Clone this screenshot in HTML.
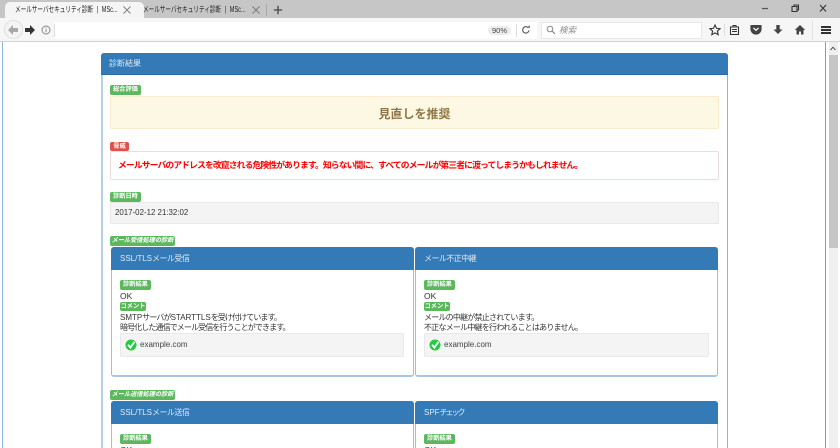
<!DOCTYPE html>
<html lang="ja"><head><meta charset="utf-8"><title>メールサーバセキュリティ診断</title>
<style>
html,body{margin:0;padding:0;width:840px;height:448px;overflow:hidden;background:#fff}
body{position:relative;font-family:"Liberation Sans","Noto Sans CJK JP",sans-serif;color:#333}
div,svg{position:absolute;box-sizing:border-box}
.t{white-space:nowrap;line-height:1}
.b{background:#5cb85c;color:#fff;font-size:6.2px;font-weight:bold;border-radius:2px;text-align:center;white-space:nowrap;height:10px;line-height:10px}
.ph{background:#337ab7;color:#dfe9f3;font-size:8px;white-space:nowrap}
.sub{border:1px solid #9dbfdd;border-bottom:2px solid #a9c6e0;border-radius:3px;background:#fff}
.well{background:#f4f4f4;border:1px solid #e9e9e9;border-radius:2px}
.tab{font-size:8px;color:#222;transform:scaleX(.7);transform-origin:0 0;word-spacing:3px}
.j{letter-spacing:-.9px}
.k{letter-spacing:-.78px}
.h{letter-spacing:-.55px}
.c{font-size:8px;color:#444}
</style></head><body>
<!-- tab strip -->
<div style="left:0;top:0;width:840px;height:18px;background:#c6c6c6"></div>
<div style="left:5px;top:2px;width:139px;height:17px;background:#f5f5f5;border-radius:5px 5px 0 0"></div>
<div class="t tab" style="left:15px;top:6px">メールサーバセキュリティ診断 | MSc...</div>
<svg style="left:122px;top:5px" width="10" height="10" viewBox="0 0 10 10"><path d="M1.500 1.500l7 7M8.500 1.500l-7 7" stroke="#777" stroke-width=".9" fill="none"/></svg>
<div class="t tab" style="left:143px;top:6px">メールサーバセキュリティ診断 | MSc...</div>
<svg style="left:251px;top:5px" width="10" height="10" viewBox="0 0 10 10"><path d="M1.500 1.500l7 7M8.500 1.500l-7 7" stroke="#777" stroke-width=".9" fill="none"/></svg>
<div style="left:266px;top:4px;width:1px;height:12px;background:#aaa"></div>
<svg style="left:273px;top:5px" width="10" height="10" viewBox="0 0 10 10"><path d="M5 .8v8.400M.8 5h8.400" stroke="#444" stroke-width="1.300" fill="none"/></svg>
<svg style="left:762px;top:4px" width="70" height="10" viewBox="0 0 70 10"><path d="M0 4.500h6" stroke="#555" stroke-width="1.200"/><path d="M30.500 2.500h4.500v5h-5v-5zM32 2.500V1h4.500v5H35" stroke="#333" stroke-width="1.100" fill="none"/><path d="M58 1l6 6.500M64 1l-6 6.500" stroke="#333" stroke-width="1.100"/></svg>
<!-- toolbar -->
<div style="left:0;top:18px;width:840px;height:24px;background:#f6f6f6;border-bottom:1px solid #d2d2d2"></div>
<div style="left:54px;top:22px;width:483px;height:17px;background:#fff"></div>
<div style="left:4px;top:20px;width:19px;height:19px;border-radius:50%;background:#f4f4f4;border:1px solid #e0e0e0"></div>
<svg style="left:7px;top:24px" width="12" height="12" viewBox="0 0 12 12"><path d="M6 1L1 6l5 5V8h5V4H6z" fill="#a8a8a8"/></svg>
<svg style="left:24px;top:24px" width="12" height="12" viewBox="0 0 12 12"><path d="M6 1l5 5-5 5V8H1V4h5z" fill="#333"/></svg>
<svg style="left:41px;top:25px" width="10" height="10" viewBox="0 0 10 10"><circle cx="5" cy="5" r="4" fill="none" stroke="#888"/><path d="M5 4.300v3M5 2.400v1" stroke="#888"/></svg>
<div style="left:54px;top:24px;width:1px;height:13px;background:#ddd"></div>
<div class="t" style="left:488px;top:26px;width:23px;height:9px;border-radius:5px;background:#ececec;font-size:7.500px;line-height:9px;text-align:center;color:#444">90%</div>
<div style="left:516px;top:24px;width:1px;height:13px;background:#ddd"></div>
<svg style="left:521px;top:25px" width="10" height="10" viewBox="0 0 10 10"><path d="M8 5.500A3.200 3.200 0 1 1 7 2.500" fill="none" stroke="#555" stroke-width="1.100"/><path d="M5.800 2.800h3V.4z" fill="#555"/></svg>
<div style="left:541px;top:22px;width:161px;height:17px;background:#fff;border:1px solid #e8e8e8"></div>
<svg style="left:546px;top:25px" width="10" height="10" viewBox="0 0 10 10"><circle cx="4" cy="4" r="2.800" fill="none" stroke="#888"/><path d="M6 6l3 3" stroke="#888" stroke-width="1.200"/></svg>
<div class="t" style="left:559px;top:26px;font-size:8.500px;color:#888;font-style:italic">検索</div>
<svg style="left:709px;top:24px" width="12" height="12" viewBox="0 0 12 12"><path d="M6 1l1.500 3.300 3.600.4-2.700 2.400.8 3.600L6 8.900l-3.200 1.800.8-3.600L.9 4.700l3.600-.4z" fill="none" stroke="#333" stroke-width="1.100"/></svg>
<div style="left:724px;top:24px;width:1px;height:12px;background:#ddd"></div>
<svg style="left:729px;top:24px" width="11" height="12" viewBox="0 0 11 12"><path d="M1.500 3h8v7.500h-8zM4 3V1.500h3V3M3 5.500h5M3 7.500h5" fill="none" stroke="#333" stroke-width="1.100"/></svg>
<svg style="left:750px;top:24px" width="12" height="11" viewBox="0 0 12 11"><path d="M1 1h10a.6.6 0 0 1 .6.6V5a5.600 5.600 0 0 1-11.200 0V1.600A.6.6 0 0 1 1 1z" fill="#444"/><path d="M3.500 4L6 6.300 8.500 4" fill="none" stroke="#fff" stroke-width="1.300"/></svg>
<svg style="left:773px;top:24px" width="10" height="12" viewBox="0 0 10 12"><path d="M3.300 1h3.400v4.500H9.500L5 10 .5 5.500h2.800z" fill="#444"/></svg>
<svg style="left:794px;top:24px" width="12" height="12" viewBox="0 0 12 12"><path d="M6 1L.8 6H2.500v4.500h2.500V7.500h2v3h2.500V6h1.700z" fill="#444"/></svg>
<div style="left:812px;top:20px;width:1px;height:20px;background:#e2e2e2"></div>
<div style="left:821px;top:26px;width:10px;height:1.500px;background:#333"></div>
<div style="left:821px;top:29px;width:10px;height:1.500px;background:#333"></div>
<div style="left:821px;top:32px;width:10px;height:1.500px;background:#333"></div>
<!-- page frame & scrollbar -->
<div style="left:2px;top:42px;width:1px;height:406px;background:#8db5dc"></div>
<div style="left:825px;top:42px;width:1px;height:406px;background:#6fa3d4"></div>
<div style="left:829px;top:42px;width:9px;height:406px;background:#efefef"></div>
<div style="left:829px;top:55px;width:9px;height:193px;background:#c6c6c6"></div>
<svg style="left:830px;top:46px" width="6" height="5" viewBox="0 0 6 5"><path d="M.5 4L3 1.200 5.500 4" fill="none" stroke="#555" stroke-width="1"/></svg>
<!-- main panel -->
<div style="left:101px;top:53px;width:627px;height:400px;border:1px solid #8fb4dc;border-left:2px solid #b5cfe8;border-radius:3px;background:#fff"></div>
<div class="ph" style="left:101px;top:53px;width:627px;height:22px;line-height:22px;padding-left:8px;border-radius:3px 3px 0 0;border-bottom:1px solid #2e6da4">診断結果</div>

<div class="b" style="left:110px;top:85px;width:31px">総合評価</div>
<div style="left:110px;top:96px;width:609px;height:33px;background:#fcf8e3;border:1px solid #faebcc;border-radius:2px"></div>
<div class="t" style="left:110px;top:108px;width:609px;text-align:center;font-size:12px;font-weight:bold;color:#8f7544">見直しを推奨</div>

<div class="b" style="left:110px;top:142px;width:19px;height:9px;line-height:9px;background:#d9534f">脅威</div>
<div style="left:110px;top:151px;width:609px;height:29px;background:#fff;border:1px solid #f0dbe0;border-radius:2px"></div>
<div class="t" style="left:118px;top:161px;font-size:8.800px;font-weight:bold;color:#f00;letter-spacing:-.88px">メールサーバのアドレスを改竄される危険性があります。知らない間に、すべてのメールが第三者に渡ってしまうかもしれません。</div>

<div class="b" style="left:110px;top:192px;width:31px">診断日時</div>
<div class="well" style="left:110px;top:202px;width:609px;height:22px"></div>
<div class="t" style="left:115px;top:209px;font-size:7.900px;color:#333">2017-02-12 21:32:02</div>

<div class="b" style="left:110px;top:236px;width:65px;font-style:italic">メール受信処理の診断</div>

<!-- row 1 -->
<div class="sub" style="left:111px;top:247px;width:303px;height:130px"></div>
<div class="ph" style="left:111px;top:247px;width:303px;height:23px;line-height:24px;padding-left:9px;border-radius:3px 3px 0 0">SSL/TLS<span class="h">メール受信</span></div>
<div class="b" style="left:120px;top:280px;width:31px">診断結果</div>
<div class="t" style="left:120px;top:292px;font-size:8.500px">OK</div>
<div class="b" style="left:120px;top:302px;width:26px;height:9px;line-height:9px">コメント</div>
<div class="t" style="left:120px;top:314px;font-size:8px">SMTP<span class="j">サーバが</span>STARTTLS<span class="j">を受け付けています。</span></div>
<div class="t" style="left:120px;top:324px;font-size:8px"><span class="j">暗号化した通信でメール受信を行うことができます。</span></div>
<div class="well" style="left:120px;top:333px;width:284px;height:24px"></div>
<svg style="left:125px;top:339px" width="12" height="12" viewBox="0 0 12 12"><circle cx="6" cy="6" r="5.500" fill="#22cc44"/><path d="M3 5.800L5.400 8.500 9.500 2.800" fill="none" stroke="#fff" stroke-width="1.800"/></svg>
<div class="t c" style="left:140px;top:341px">example.com</div>

<div class="sub" style="left:415px;top:247px;width:303px;height:130px"></div>
<div class="ph" style="left:415px;top:247px;width:303px;height:23px;line-height:24px;padding-left:9px;border-radius:3px 3px 0 0"><span class="h">メール不正中継</span></div>
<div class="b" style="left:424px;top:280px;width:31px">診断結果</div>
<div class="t" style="left:424px;top:292px;font-size:8.500px">OK</div>
<div class="b" style="left:424px;top:302px;width:26px;height:9px;line-height:9px">コメント</div>
<div class="t" style="left:424px;top:314px;font-size:8px"><span class="k">メールの中継が禁止されています。</span></div>
<div class="t" style="left:424px;top:324px;font-size:8px"><span class="k">不正なメール中継を行われることはありません。</span></div>
<div class="well" style="left:424px;top:333px;width:285px;height:24px"></div>
<svg style="left:429px;top:339px" width="12" height="12" viewBox="0 0 12 12"><circle cx="6" cy="6" r="5.500" fill="#22cc44"/><path d="M3 5.800L5.400 8.500 9.500 2.800" fill="none" stroke="#fff" stroke-width="1.800"/></svg>
<div class="t c" style="left:444px;top:341px">example.com</div>

<div class="b" style="left:110px;top:390px;width:65px;font-style:italic">メール送信処理の診断</div>

<!-- row 2 -->
<div class="sub" style="left:111px;top:401px;width:303px;height:60px"></div>
<div class="ph" style="left:111px;top:401px;width:303px;height:23px;line-height:24px;padding-left:9px;border-radius:3px 3px 0 0">SSL/TLS<span class="h">メール送信</span></div>
<div class="b" style="left:120px;top:434px;width:31px">診断結果</div>
<div class="t" style="left:120px;top:446px;font-size:8.500px">OK</div>
<div class="sub" style="left:415px;top:401px;width:303px;height:60px"></div>
<div class="ph" style="left:415px;top:401px;width:303px;height:23px;line-height:24px;padding-left:9px;border-radius:3px 3px 0 0">SPF<span style="letter-spacing:-2px">チェック</span></div>
<div class="b" style="left:424px;top:434px;width:31px">診断結果</div>
<div class="t" style="left:424px;top:446px;font-size:8.500px">OK</div>
</body></html>
